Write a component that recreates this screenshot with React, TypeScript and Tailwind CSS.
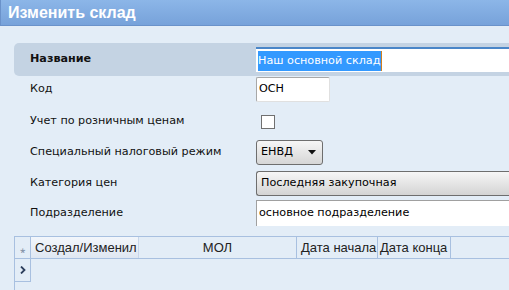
export default function App() {
  const label = "pl-4 w-[242px] shrink-0 text-[11.2px] text-[#111]";

  return (
    <div className="w-[509px] h-[290px] overflow-hidden bg-[#e3edf7] font-['DejaVu_Sans',sans-serif]">
      <div className="h-[26px] border-b border-l border-[#6a92ca] bg-gradient-to-b from-[#8cb6e8] to-[#77a2da] pl-[7px] flex items-center">
        <span className="font-['Liberation_Sans',sans-serif] text-[16px] font-bold text-white leading-none">
          Изменить склад
        </span>
      </div>

      <div className="pl-[14px] mt-[17px]">
        <div className="h-[33px] flex items-center bg-[#c4d3e3] rounded-l-[5px]">
          <div className={label + " font-bold"}>Название</div>
          <div className="h-[25px] flex-1 bg-white border-t-2 border-[#4a86c8] flex items-center pl-[2px]">
            <span className="bg-[#3399ff] text-white text-[11.2px] leading-[20px] pr-[1px] border-r border-[#d08020]">
              Наш основной склад
            </span>
          </div>
        </div>

        <div className="h-[26px] flex items-center">
          <div className={label}>Код</div>
          <div className="h-[25px] w-[74px] bg-white border border-[#a8a8a8] border-r-[#e0e0e0] border-b-[#e0e0e0] rounded-[2px] flex items-center pl-[2px] text-[11.2px] text-black">
            ОСН
          </div>
        </div>

        <div className="h-[38px] flex items-center">
          <div className={label}>Учет по розничным ценам</div>
          <div className="ml-[5px] mt-[1px] w-[14px] h-[14px] border border-[#707070] bg-white"></div>
        </div>

        <div className="h-[24px] flex items-center">
          <div className={label}>Специальный налоговый режим</div>
          <div className="h-[25px] w-[67px] rounded-[3px] border border-[#6e6e6e] bg-gradient-to-b from-[#f6f6f6] to-[#d6d6d6] flex items-center pl-[4px] pr-[6px] justify-between text-[11.2px] text-black">
            <span>ЕНВД</span>
            <svg width="8" height="5" viewBox="0 0 8 5">
              <path d="M0 0 H8 L4 4.5 Z" fill="#111" />
            </svg>
          </div>
        </div>

        <div className="h-[26px] mt-[6px] flex items-center">
          <div className={label}>Категория цен</div>
          <div className="h-[25px] flex-1 rounded-l-[3px] border border-r-0 border-[#6e6e6e] bg-gradient-to-b from-[#f6f6f6] to-[#d4d4d4] flex items-center pl-[4px] text-[11.2px] text-black">
            Последняя закупочная
          </div>
        </div>

        <div className="h-[26px] mt-[4px] flex items-center">
          <div className={label}>Подразделение</div>
          <div className="h-[26px] flex-1 bg-white border-t border-l border-[#a0a0a0] flex items-center pl-[2px] text-[11.2px] text-black">
            основное подразделение
          </div>
        </div>

        <div className="mt-[10px] border-l border-[#a8c0e0] h-[60px] font-['Liberation_Sans',sans-serif] text-[13px] text-[#222]">
          <div className="h-[23px] flex border-t border-b border-[#a8c0e0]">
            <div className="w-[16px] shrink-0 border-r border-[#a8c0e0] flex items-center justify-center text-[10px] text-[#7a8aa0]">
              ⁎
            </div>
            <div className="w-[108px] shrink-0 border-r border-[#c8d6ea] bg-gradient-to-b from-[#f2f6fb] to-[#dfe7f2] flex items-center pl-[4px]">
              Создал/Изменил
            </div>
            <div className="w-[158px] shrink-0 border-r border-[#a8c0e0] flex items-center justify-center">
              МОЛ
            </div>
            <div className="w-[81px] shrink-0 border-r border-[#a8c0e0] flex items-center pl-[4px]">
              Дата начала
            </div>
            <div className="w-[73px] shrink-0 border-r border-[#a8c0e0] flex items-center pl-[2px]">
              Дата конца
            </div>
            <div className="flex-1"></div>
          </div>
          <div className="h-[23px] w-[16px] border-r border-b border-[#a8c0e0] flex items-center justify-center">
            <svg width="6" height="8" viewBox="0 0 6 8">
              <path d="M1 0.5 L4.5 4 L1 7.5" stroke="#2c3e5c" strokeWidth="1.8" fill="none" />
            </svg>
          </div>
        </div>
      </div>
    </div>
  );
}
